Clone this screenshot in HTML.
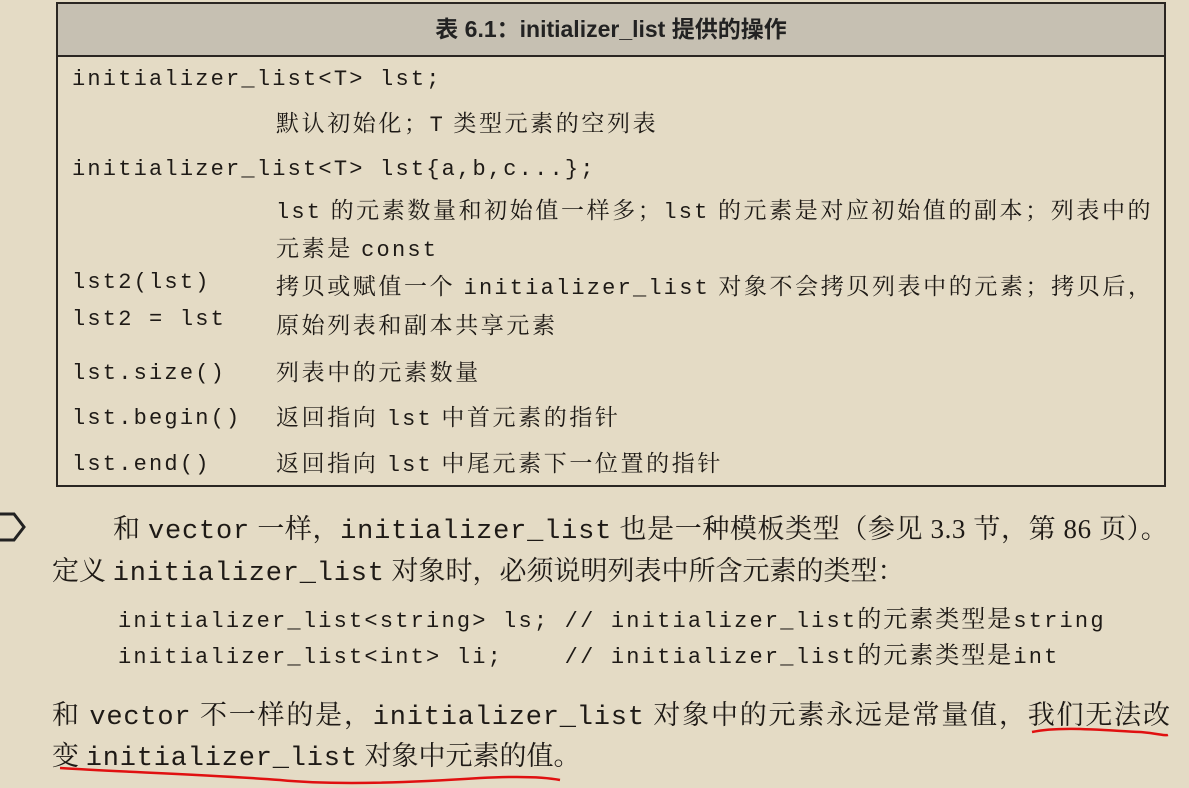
<!DOCTYPE html>
<html><head><meta charset="utf-8"><style>
body{margin:0;width:1189px;height:788px;background:#e4dbc5;position:relative;overflow:hidden;font-family:"Liberation Serif","Noto Serif CJK SC",serif;color:#1e1a16}
.a{position:absolute;white-space:pre;line-height:30px;height:30px}
.m{font-family:"Liberation Mono","Noto Serif CJK SC",monospace}
.t{font-size:22px;letter-spacing:2.2px}
.c{font-size:23px;letter-spacing:2.6px}
.c .m{font-size:22px;letter-spacing:2.2px}
.b{font-size:27px}
.bm{font-size:27px;letter-spacing:0.8px}
</style></head><body>
<div style="position:absolute;left:56px;top:2px;width:1110px;height:485px;border:2px solid #2a2622;box-sizing:border-box"></div>
<div style="position:absolute;left:58px;top:4px;width:1106px;height:51px;background:#c6c0b2;border-bottom:2px solid #2a2622"></div>
<div class="a" style="left:0;width:1222px;text-align:center;top:14px;font-family:'Liberation Sans','Noto Sans CJK SC',sans-serif;font-size:23px;font-weight:bold;color:#222">表 6.1：initializer_list 提供的操作</div>

<div class="a m t" style="left:72px;top:65px">initializer_list&lt;T&gt; lst;</div>
<div class="a c" style="left:276px;top:109px">默认初始化；<span class="m">T</span> 类型元素的空列表</div>
<div class="a m t" style="left:72px;top:155px">initializer_list&lt;T&gt; lst{a,b,c...};</div>
<div class="a c" style="left:276px;top:196px"><span class="m">lst</span> 的元素数量和初始值一样多；<span class="m">lst</span> 的元素是对应初始值的副本；列表中的</div>
<div class="a c" style="left:276px;top:234px">元素是 <span class="m">const</span></div>
<div class="a m t" style="left:72px;top:268px">lst2(lst)</div>
<div class="a c" style="left:276px;top:272px">拷贝或赋值一个 <span class="m">initializer_list</span> 对象不会拷贝列表中的元素；拷贝后，</div>
<div class="a m t" style="left:72px;top:305px">lst2 = lst</div>
<div class="a c" style="left:276px;top:311px">原始列表和副本共享元素</div>
<div class="a m t" style="left:72px;top:359px">lst.size()</div>
<div class="a c" style="left:276px;top:358px">列表中的元素数量</div>
<div class="a m t" style="left:72px;top:404px">lst.begin()</div>
<div class="a c" style="left:276px;top:403px">返回指向 <span class="m">lst</span> 中首元素的指针</div>
<div class="a m t" style="left:72px;top:450px">lst.end()</div>
<div class="a c" style="left:276px;top:449px">返回指向 <span class="m">lst</span> 中尾元素下一位置的指针</div>

<svg style="position:absolute;left:0;top:512px" width="30" height="34"><path d="M0 2 H14 L24 15 L14 28 H0" fill="none" stroke="#222" stroke-width="3"/></svg>
<div class="a b" style="left:113px;top:514px;letter-spacing:0.6px">和 <span class="m bm">vector</span> 一样，<span class="m bm">initializer_list</span> 也是一种模板类型（参见 3.3 节，第 86 页）。</div>
<div class="a b" style="left:52px;top:556px">定义 <span class="m bm">initializer_list</span> 对象时，必须说明列表中所含元素的类型：</div>
<div class="a m t" style="left:118px;top:607px">initializer_list&lt;string&gt; ls; // initializer_list<span style="font-size:24px;letter-spacing:2px">的元素类型是</span>string</div>
<div class="a m t" style="left:118px;top:643px">initializer_list&lt;int&gt; li;    // initializer_list<span style="font-size:24px;letter-spacing:2px">的元素类型是</span>int</div>
<div class="a b" style="left:52px;top:700px;letter-spacing:1.8px">和 <span class="m bm">vector</span> 不一样的是，<span class="m bm">initializer_list</span> 对象中的元素永远是常量值，我们无法改</div>
<div class="a b" style="left:52px;top:741px">变 <span class="m bm">initializer_list</span> 对象中元素的值。</div>
<svg style="position:absolute;left:0;top:720px" width="1189" height="68"><path d="M1032 12 C1060 6 1100 10 1140 12 1155 13 1165 16 1168 15" fill="none" stroke="#e01010" stroke-width="2.5"/><path d="M60 48 C120 52 200 54 280 60 C340 66 420 62 480 58 520 56 545 57 560 60" fill="none" stroke="#e01010" stroke-width="2.5"/></svg>
</body></html>
